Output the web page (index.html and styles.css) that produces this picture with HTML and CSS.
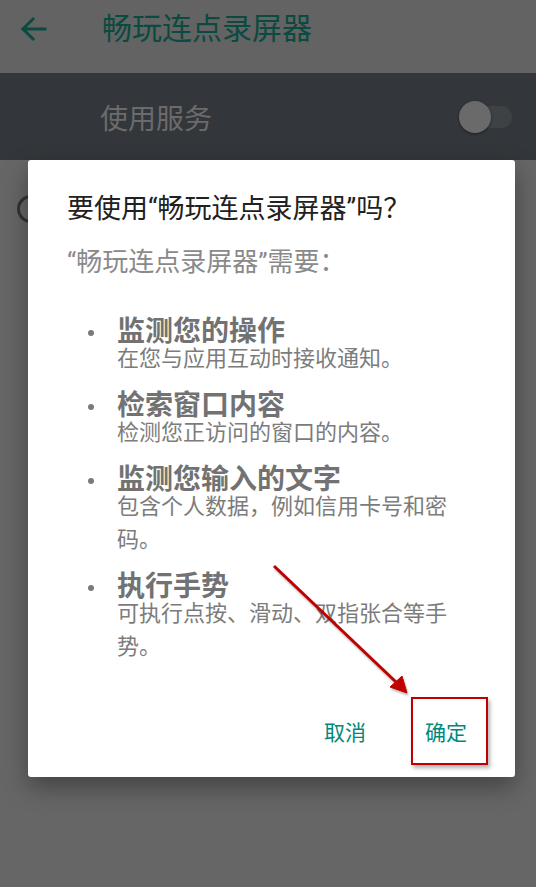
FILE: index.html
```html
<!DOCTYPE html>
<html lang="zh-CN">
<head>
<meta charset="UTF-8">
<meta name="viewport" content="width=device-width, initial-scale=1.0">
<title>畅玩连点录屏器</title>
<link rel="stylesheet" href="styles.css">
</head>
<body>

<!-- 顶部标题栏 -->
<div class="appbar">
  <svg class="back" width="28" height="26" viewBox="0 0 28 26">
    <path d="M26 13H4M14 3L4 13l10 10" fill="none" stroke="#0b4a40" stroke-width="3" stroke-linecap="square"/>
  </svg>
  <span class="appbar-title">畅玩连点录屏器</span>
</div>

<!-- 使用服务开关 -->
<div class="switch-row">
  <span class="switch-label">使用服务</span>
  <span class="toggle"><span class="thumb"></span></span>
</div>

<!-- 下面的设置列表 -->
<div class="list">
  <span class="radio"></span>
</div>

<!-- 权限确认弹窗 -->
<div class="dialog">
  <div class="dialog-title">要使用“畅玩连点录屏器”吗？</div>
  <div class="dialog-sub">“畅玩连点录屏器”需要：</div>

  <ul class="perms">
    <li>
      <div class="perm-name">监测您的操作</div>
      <div class="perm-desc">在您与应用互动时接收通知。</div>
    </li>
    <li>
      <div class="perm-name">检索窗口内容</div>
      <div class="perm-desc">检测您正访问的窗口的内容。</div>
    </li>
    <li>
      <div class="perm-name">监测您输入的文字</div>
      <div class="perm-desc">包含个人数据，例如信用卡号和密码。</div>
    </li>
    <li>
      <div class="perm-name">执行手势</div>
      <div class="perm-desc">可执行点按、滑动、双指张合等手势。</div>
    </li>
  </ul>

  <div class="actions">
    <span class="btn">取消</span>
    <span class="btn">确定</span>
  </div>
</div>

<!-- 标注：红框和箭头 -->
<div class="mark-box"></div>
<svg class="mark-arrow" width="536" height="887" viewBox="0 0 536 887">
  <g fill="#c00000" stroke="#c00000" style="filter: drop-shadow(1px 2px 1px rgba(0,0,0,.3))">
    <line x1="274" y1="566" x2="396" y2="682" stroke-width="3"/>
    <polygon points="407,693 390,687 402,676" stroke-width="1"/>
  </g>
</svg>

</body>
</html>
```

FILE: styles.css
```css
/* 整体页面，弹窗下面是半透明遮罩后的颜色 */
body {
  margin: 0;
  width: 536px;
  height: 887px;
  position: relative;
  overflow: hidden;
  background: #666;
  font-family: Roboto, "Noto Sans CJK SC", sans-serif;
}

/* 顶部标题栏 */
.appbar {
  height: 73px;
  box-sizing: border-box;
  padding: 0 0 15px 19px;
  background: #636363;
  display: flex;
  align-items: center;
}

.back {
  display: block;
}

.appbar-title {
  margin-left: 55px;
  font-size: 30px;
  color: #0b4a40;
  line-height: 1;
}

/* 使用服务这一行 */
.switch-row {
  height: 87px;
  background: #33363a;
  display: flex;
  align-items: center;
  justify-content: space-between;
  padding: 0 24px 0 100px;
}

.switch-label {
  font-size: 28px;
  color: #6b6b6b;
}

.toggle {
  position: relative;
  width: 39px;
  height: 22px;
  border-radius: 11px;
  background: #3f4245;
}

.toggle .thumb {
  position: absolute;
  left: -14px;
  top: -5px;
  width: 32px;
  height: 32px;
  border-radius: 50%;
  background: #6a6a6a;
  box-shadow: 0 1px 3px rgba(0, 0, 0, .4);
}

/* 列表里的单选圆圈，大部分被弹窗挡住 */
.list {
  padding: 35px 0 0 17px;
}

.radio {
  display: block;
  width: 22px;
  height: 22px;
  border: 3px solid #333;
  border-radius: 50%;
}

/* 弹窗 */
.dialog {
  position: absolute;
  left: 28px;
  top: 160px;
  width: 487px;
  height: 617px;
  box-sizing: border-box;
  padding: 30px 32px 20px 39px;
  background: #fff;
  border-radius: 3px;
  box-shadow: 0 10px 24px rgba(0, 0, 0, .35);
  display: flex;
  flex-direction: column;
}

.dialog-title {
  font-size: 27px;
  line-height: 38px;
  color: #212121;
}

.dialog-sub {
  margin-top: 16px;
  font-size: 26px;
  line-height: 36px;
  color: #8a8a8a;
}

/* 权限列表 */
.perms {
  list-style: none;
  margin: 38px 0 0;
  padding: 0 26px 0 50px;
  display: flex;
  flex-direction: column;
  gap: 17px;
}

.perms li {
  position: relative;
}

.perms li::before {
  content: "";
  position: absolute;
  left: -29px;
  top: 12px;
  width: 6px;
  height: 6px;
  border-radius: 50%;
  background: #7a7a7a;
}

.perm-name {
  font-size: 28px;
  font-weight: bold;
  line-height: 28px;
  color: #727272;
}

.perm-desc {
  margin-top: -4px;
  font-size: 22px;
  line-height: 33px;
  color: #7c7c7c;
}

/* 底部按钮 */
.actions {
  margin-top: auto;
  display: flex;
  justify-content: flex-end;
  gap: 27px;
}

.btn {
  padding: 0 16px;
  font-size: 21px;
  line-height: 48px;
  color: #00897b;
}

/* 红色标注框 */
.mark-box {
  position: absolute;
  left: 411px;
  top: 697px;
  width: 73px;
  height: 64px;
  border: 2px solid #c00000;
  box-shadow: 2px 3px 4px rgba(0, 0, 0, .3);
}

.mark-arrow {
  position: absolute;
  left: 0;
  top: 0;
  pointer-events: none;
}
```
